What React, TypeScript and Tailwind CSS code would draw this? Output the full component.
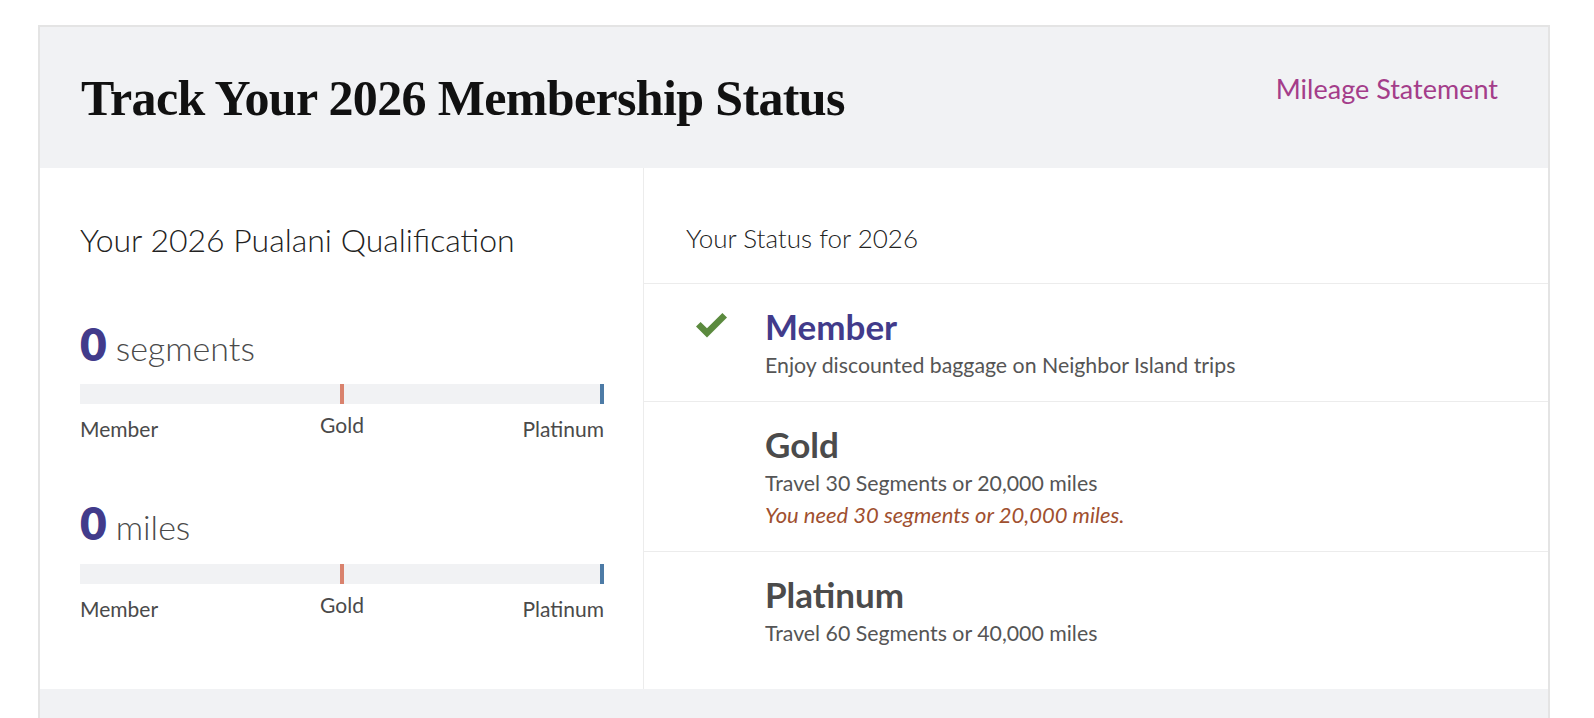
import React from "react";

const sans = "font-['Lato','Noto_Sans',sans-serif]";

function Bar() {
  return (
    <div className="relative h-[20px] w-full bg-[#f1f2f4]">
      <div className="absolute left-1/2 top-0 h-full w-[4px] -translate-x-1/2 bg-[#d9826d]" />
      <div className="absolute right-0 top-0 h-full w-[4px] bg-[#4d7ba6]" />
    </div>
  );
}

function Labels() {
  return (
    <div className="mt-[9px] grid grid-cols-3 text-[21px] leading-[24px] text-[#4a4a4a]">
      <div className="mt-[4px] text-left">Member</div>
      <div className="text-center">Gold</div>
      <div className="mt-[4px] text-right">Platinum</div>
    </div>
  );
}

function Metric({ value, unit }: { value: string; unit: string }) {
  return (
    <div className="flex h-[48px] items-baseline">
      <span className="text-[46px] font-extrabold leading-[48px] text-[#423b8b]">{value}</span>
      <span className="ml-[9px] text-[34px] font-light leading-[32px] text-[#4a4a4a]">{unit}</span>
    </div>
  );
}

function Check() {
  return (
    <svg width="31" height="25" viewBox="0 0 31 25" className="mt-[4px]">
      <polygon points="0,13.5 4.6,8.9 11,15.3 26.4,0 31,4.6 11,24.6" fill="#5b8a3e" />
    </svg>
  );
}

function StatusRow({
  title,
  titleColor,
  lines,
  checked,
  grow,
}: {
  title: string;
  titleColor: string;
  lines: { text: string; italic?: boolean }[];
  checked?: boolean;
  grow?: boolean;
}) {
  return (
    <div
      className={
        "flex items-start pl-[52px] pt-[25px] pb-[20px] " +
        (grow ? "flex-1" : "border-b border-[#ececec]")
      }
    >
      <div className="w-[69px] shrink-0">{checked ? <Check /> : null}</div>
      <div>
        <div className={"text-[35px] font-bold leading-[34px] " + titleColor}>{title}</div>
        <div className="mt-[6px] leading-[32px]">
          {lines.map((l, i) => (
            <div
              key={i}
              className={l.italic ? "text-[22px] italic text-[#a0502f]" : "text-[21.3px] text-[#555555]"}
            >
              {l.text}
            </div>
          ))}
        </div>
      </div>
    </div>
  );
}

export default function App() {
  return (
    <div className={"min-h-[718px] w-full bg-white pt-[25px] " + sans}>
      <div className="ml-[38px] w-[1512px] border-2 border-b-0 border-[#e4e4e4]">
        {/* Header */}
        <div className="flex h-[141px] items-start justify-between bg-[#f1f2f4] pl-[41px] pr-[50px] pt-[46px]">
          <h1 className="font-['Liberation_Serif','Times_New_Roman',serif] text-[50px] font-bold leading-none tracking-[-0.013em] text-[#111111]">
            Track Your 2026 Membership Status
          </h1>
          <a className="text-[27px] leading-[32px] text-[#a43d8a]" href="#">
            Mileage Statement
          </a>
        </div>

        {/* Content */}
        <div className="flex bg-white">
          <div className="w-[604px] shrink-0 border-r border-[#ececec] pl-[40px] pr-[39px] pt-[54px] pb-[68px]">
            <h2 className="text-[32px] font-light leading-[36px] text-[#222222]">
              Your 2026 Pualani Qualification
            </h2>
            <div className="mt-[62px]">
              <Metric value="0" unit="segments" />
            </div>
            <div className="mt-[16px]">
              <Bar />
            </div>
            <Labels />
            <div className="mt-[58px]">
              <Metric value="0" unit="miles" />
            </div>
            <div className="mt-[17px]">
              <Bar />
            </div>
            <Labels />
          </div>

          <div className="flex flex-1 flex-col">
            <div className="h-[116px] border-b border-[#ececec] pl-[42px] pt-[55px]">
              <h2 className="text-[26px] font-light leading-[30px] text-[#222222]">Your Status for 2026</h2>
            </div>
            <StatusRow
              title="Member"
              titleColor="text-[#423b8b]"
              checked
              lines={[{ text: "Enjoy discounted baggage on Neighbor Island trips" }]}
            />
            <StatusRow
              title="Gold"
              titleColor="text-[#4b4b4b]"
              lines={[
                { text: "Travel 30 Segments or 20,000 miles" },
                { text: "You need 30 segments or 20,000 miles.", italic: true },
              ]}
            />
            <StatusRow
              title="Platinum"
              titleColor="text-[#4b4b4b]"
              grow
              lines={[{ text: "Travel 60 Segments or 40,000 miles" }]}
            />
          </div>
        </div>

        {/* Footer strip */}
        <div className="h-[60px] bg-[#f1f2f4]" />
      </div>
    </div>
  );
}
